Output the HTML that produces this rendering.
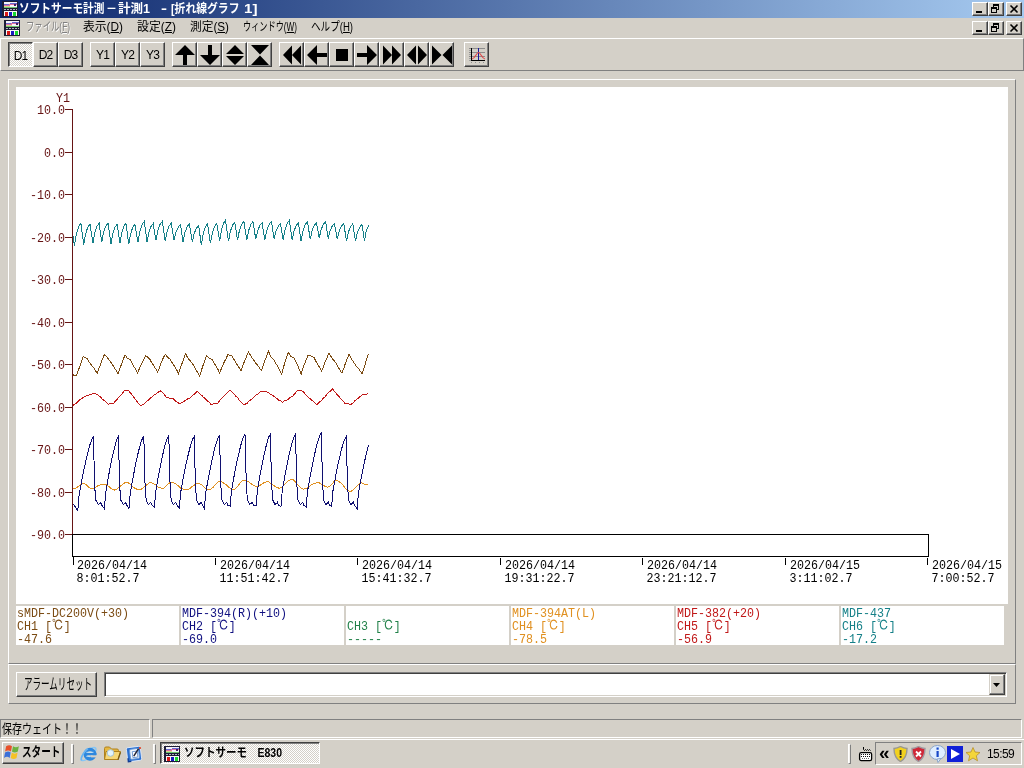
<!DOCTYPE html><html lang="ja"><head><meta charset="utf-8"><title>ソフトサーモ計測</title><style>
*{box-sizing:border-box;margin:0;padding:0}
html,body{width:1024px;height:768px;overflow:hidden;background:#d4d0c8;font-family:"Liberation Sans","Noto Sans CJK JP",sans-serif;font-size:12px;color:#000}
.abs{position:absolute}
#title{left:0;top:0;width:1024px;height:18px;background:linear-gradient(to right,#0a246a 0%,#a6caf0 100%)}
#ttext{left:19px;top:0;height:18px;line-height:17px;color:#fff;font-weight:bold;font-size:12px;white-space:nowrap;transform-origin:0 50%}
.cb{width:16px;height:14px;background:#d4d0c8;border:1px solid;border-color:#fff #404040 #404040 #fff;box-shadow:inset -1px -1px 0 #808080}
.menu{top:18px;height:20px;line-height:19px;font-size:12px;white-space:nowrap;transform-origin:0 50%}
.menu u{text-decoration:underline}
#tb{left:0;top:38px;width:1024px;height:33px;border-top:1px solid #fff;border-left:1px solid #fff;border-bottom:1px solid #808080;border-right:1px solid #808080}
.btn{top:42px;width:25px;height:25px;background:#d4d0c8;border:1px solid;border-color:#fff #404040 #404040 #fff;box-shadow:inset -1px -1px 0 #808080;text-align:center;line-height:24px;font-size:12px;letter-spacing:-0.8px}
.btn.down{border-color:#404040 #fff #fff #404040;box-shadow:inset 1px 1px 0 #808080;background-color:#d4d0c8;background-image:conic-gradient(#fff 25%,#d4d0c8 0 50%,#fff 0 75%,#d4d0c8 0);background-size:2px 2px;line-height:26px}
.btn svg{position:absolute;left:0;top:0}
.panel{border:1px solid;border-color:#fff #808080 #808080 #fff}
.mono{font-family:"Liberation Mono","IPAGothic",monospace;font-size:11.67px;white-space:pre;line-height:11.207px;transform:scaleY(1.16);transform-origin:0 0}
.leg{top:606px;height:39px;background:#fff}
.sunk{border:1px solid;border-color:#808080 #fff #fff #808080}
</style></head><body><div id="root" style="position:absolute;left:0;top:0;width:1024px;height:768px;will-change:transform;overflow:hidden"><div id="title" class="abs"></div><svg class="abs" style="left:2px;top:1px" width="16" height="16" viewBox="0 0 16 16" shape-rendering="crispEdges"><rect x="0" y="0" width="16" height="16" fill="#1c1c34"/><rect x="2" y="1" width="13" height="6" fill="#f4f4fa"/><rect x="2" y="6" width="13" height="1" fill="#6cc46c"/><rect x="2" y="5" width="6" height="1" fill="#d8d890"/><path d="M2 3.500H7L10 2.500H15" stroke="#6868d0" fill="none"/><path d="M2 4.500H6L9 3.500H15" stroke="#e070a0" fill="none"/><rect x="12" y="3" width="2" height="2" fill="#402060"/><path d="M2 8.500H15" stroke="#b0b0c0" stroke-dasharray="2 1" fill="none"/><rect x="2" y="10" width="13" height="5" fill="#f8f8f8"/><rect x="3" y="11" width="3" height="4" fill="#d81818"/><rect x="7" y="11" width="3" height="4" fill="#1818c0"/><rect x="11" y="11" width="3" height="4" fill="#18d830"/></svg><div class="abs fit" id="t1" style="left:19px;top:0px;white-space:nowrap;transform-origin:0 50%;transform:scaleX(0.8549);height:18px;line-height:19px;color:#fff;font-weight:bold;font-size:12.5px;">ソフトサーモ計測</div><div class="abs fit" id="t2" style="left:106px;top:0px;white-space:nowrap;transform-origin:0 50%;transform:scaleX(0.8789);height:18px;line-height:19px;color:#fff;font-weight:bold;font-size:12.5px;">－</div><div class="abs fit" id="t3" style="left:118px;top:0px;white-space:nowrap;transform-origin:0 50%;transform:scaleX(1.0015);height:18px;line-height:19px;color:#fff;font-weight:bold;font-size:12.5px;">計測1</div><div class="abs fit" id="t4" style="left:160.5px;top:0px;white-space:nowrap;transform-origin:0 50%;transform:scaleX(1.4382);height:18px;line-height:19px;color:#fff;font-weight:bold;font-size:12.5px;">-</div><div class="abs fit" id="t5" style="left:171px;top:0px;white-space:nowrap;transform-origin:0 50%;transform:scaleX(0.8652);height:18px;line-height:19px;color:#fff;font-weight:bold;font-size:12.5px;">[折れ線グラフ</div><div class="abs fit" id="t6" style="left:244px;top:0px;white-space:nowrap;transform-origin:0 50%;transform:scaleX(1.2135);height:18px;line-height:19px;color:#fff;font-weight:bold;font-size:12.5px;">1]</div><div class="abs cb" style="left:972px;top:2px"><svg class="abs" style="left:0;top:0" width="14" height="12"><rect x="3" y="8" width="6" height="2" fill="#000"/></svg></div><div class="abs cb" style="left:988px;top:2px"><svg class="abs" style="left:0;top:0" width="14" height="12"><rect x="4.5" y="2.5" width="5" height="4" fill="none" stroke="#000"/><rect x="4" y="1" width="6" height="2" fill="#000"/><rect x="2.5" y="5.5" width="5" height="4" fill="#d4d0c8" stroke="#000"/><rect x="2" y="4" width="6" height="2" fill="#000"/></svg></div><div class="abs cb" style="left:1006px;top:2px"><svg class="abs" style="left:0;top:0" width="14" height="12"><path d="M3.5 2.5l7 7M10.5 2.5l-7 7" stroke="#000" stroke-width="1.6" fill="none"/></svg></div><svg class="abs" style="left:4px;top:20px" width="16" height="16" viewBox="0 0 16 16" shape-rendering="crispEdges"><rect x="0" y="0" width="16" height="16" fill="#1c1c34"/><rect x="2" y="1" width="13" height="6" fill="#f4f4fa"/><rect x="2" y="6" width="13" height="1" fill="#6cc46c"/><rect x="2" y="5" width="6" height="1" fill="#d8d890"/><path d="M2 3.500H7L10 2.500H15" stroke="#6868d0" fill="none"/><path d="M2 4.500H6L9 3.500H15" stroke="#e070a0" fill="none"/><rect x="12" y="3" width="2" height="2" fill="#402060"/><path d="M2 8.500H15" stroke="#b0b0c0" stroke-dasharray="2 1" fill="none"/><rect x="2" y="10" width="13" height="5" fill="#f8f8f8"/><rect x="3" y="11" width="3" height="4" fill="#d81818"/><rect x="7" y="11" width="3" height="4" fill="#1818c0"/><rect x="11" y="11" width="3" height="4" fill="#18d830"/></svg><div class="abs menu" id="m0" style="left:26px;color:#808080;text-shadow:1px 1px 0 #fff;transform:scaleX(0.695);">ファイル(<u>F</u>)</div><div class="abs menu" id="m1" style="left:83px;transform:scaleX(0.984);">表示(<u>D</u>)</div><div class="abs menu" id="m2" style="left:137px;transform:scaleX(0.991);">設定(<u>Z</u>)</div><div class="abs menu" id="m3" style="left:190px;transform:scaleX(0.975);">測定(<u>S</u>)</div><div class="abs menu" id="m4" style="left:243px;transform:scaleX(0.681);">ウィンドウ(<u>W</u>)</div><div class="abs menu" id="m5" style="left:311px;transform:scaleX(0.797);">ヘルプ(<u>H</u>)</div><div class="abs cb" style="left:972px;top:21px"><svg class="abs" style="left:0;top:0" width="14" height="12"><rect x="3" y="8" width="6" height="2" fill="#000"/></svg></div><div class="abs cb" style="left:988px;top:21px"><svg class="abs" style="left:0;top:0" width="14" height="12"><rect x="4.5" y="2.5" width="5" height="4" fill="none" stroke="#000"/><rect x="4" y="1" width="6" height="2" fill="#000"/><rect x="2.5" y="5.5" width="5" height="4" fill="#d4d0c8" stroke="#000"/><rect x="2" y="4" width="6" height="2" fill="#000"/></svg></div><div class="abs cb" style="left:1006px;top:21px"><svg class="abs" style="left:0;top:0" width="14" height="12"><path d="M3.5 2.5l7 7M10.5 2.5l-7 7" stroke="#000" stroke-width="1.6" fill="none"/></svg></div><div id="tb" class="abs"></div><div class="abs btn down" style="left:8px;">D1</div><div class="abs btn" style="left:33px;">D2</div><div class="abs btn" style="left:58px;">D3</div><div class="abs btn" style="left:90px;">Y1</div><div class="abs btn" style="left:115px;">Y2</div><div class="abs btn" style="left:140px;">Y3</div><div class="abs btn" style="left:172px;"><svg width="23" height="23" viewBox="0 0 23 23"><path d="M12 2L22 12H14V22H10V12H2Z" fill="#000"/></svg></div><div class="abs btn" style="left:197px;"><svg width="23" height="23" viewBox="0 0 23 23"><path d="M12 22L22 12H14V2H10V12H2Z" fill="#000"/></svg></div><div class="abs btn" style="left:222px;"><svg width="23" height="23" viewBox="0 0 23 23"><path d="M12 2L21 11H3Z M12 22L21 13H3Z" fill="#000"/></svg></div><div class="abs btn" style="left:247px;"><svg width="23" height="23" viewBox="0 0 23 23"><path d="M3 2H21L12 11.500Z M3 22H21L12 12.500Z" fill="#000"/></svg></div><div class="abs btn" style="left:279px;"><svg width="23" height="23" viewBox="0 0 23 23"><path d="M12 2.500V21.500L3 12Z M21 2.500V21.500L12 12Z" fill="#000"/></svg></div><div class="abs btn" style="left:304px;"><svg width="23" height="23" viewBox="0 0 23 23"><path d="M2 12L12 2V10H22V14H12V22Z" fill="#000"/></svg></div><div class="abs btn" style="left:329px;"><svg width="23" height="23" viewBox="0 0 23 23"><rect x="6" y="6" width="12" height="12" fill="#000"/></svg></div><div class="abs btn" style="left:354px;"><svg width="23" height="23" viewBox="0 0 23 23"><path d="M22 12L12 2V10H2V14H12V22Z" fill="#000"/></svg></div><div class="abs btn" style="left:379px;"><svg width="23" height="23" viewBox="0 0 23 23"><path d="M3 2.500V21.500L12 12Z M12 2.500V21.500L21 12Z" fill="#000"/></svg></div><div class="abs btn" style="left:404px;"><svg width="23" height="23" viewBox="0 0 23 23"><path d="M11 2.500V21.500L2 12Z M13 2.500V21.500L22 12Z" fill="#000"/></svg></div><div class="abs btn" style="left:429px;"><svg width="23" height="23" viewBox="0 0 23 23"><path d="M2 2.500V21.500L11.500 12Z M22 2.500V21.500L12.500 12Z" fill="#000"/></svg></div><div class="abs btn" style="left:464px;"><svg width="23" height="23" viewBox="0 0 23 23"><g shape-rendering="crispEdges"><path d="M4 5.500H20M4 9.500H20M4 13.500H20" stroke="#8c8c8c" fill="none"/><path d="M4 7.500H6M4 11.500H6M4 15.500H6M4 17.500H6" stroke="#a0a0a0" fill="none"/><path d="M6.500 19V20M10.500 19V20M14.500 19V20M18.500 19V20" stroke="#909090" fill="none"/><path d="M6.500 5V18M6 17.500H20" stroke="#000" fill="none"/><path d="M13.500 5V17" stroke="#18189c" fill="none"/></g><path d="M7 16C10 15.500 11.500 9.500 13.500 9.500S17 15.500 20 16" stroke="#e04848" fill="none" stroke-width="1.2"/></svg></div><div class="abs panel" style="left:8px;top:79px;width:1008px;height:585px"></div><div class="abs" style="left:16px;top:87px;width:992px;height:517px;background:#fff"></div><div class="abs leg" style="left:16px;width:163px"></div><div class="abs mono" style="left:17px;top:608px;color:#7b4b13">sMDF-DC200V(+30)
CH1 [<span class="dc">℃</span>]
-47.6</div><div class="abs leg" style="left:181px;width:163px"></div><div class="abs mono" style="left:182px;top:608px;color:#101080">MDF-394(R)(+10)
CH2 [<span class="dc">℃</span>]
-69.0</div><div class="abs leg" style="left:346px;width:163px"></div><div class="abs mono" style="left:347px;top:608px;color:#208048"> 
CH3 [<span class="dc">℃</span>]
-----</div><div class="abs leg" style="left:511px;width:163px"></div><div class="abs mono" style="left:512px;top:608px;color:#e09020">MDF-394AT(L)
CH4 [<span class="dc">℃</span>]
-78.5</div><div class="abs leg" style="left:676px;width:163px"></div><div class="abs mono" style="left:677px;top:608px;color:#c01818">MDF-382(+20)
CH5 [<span class="dc">℃</span>]
-56.9</div><div class="abs leg" style="left:841px;width:163px"></div><div class="abs mono" style="left:842px;top:608px;color:#158088">MDF-437
CH6 [<span class="dc">℃</span>]
-17.2</div><svg class="abs" style="left:0;top:0" width="1024" height="768" viewBox="0 0 1024 768" shape-rendering="crispEdges"><path d="M72.5 109V534" stroke="#661414" fill="none"/><path d="M65 109.5H72" stroke="#661414" fill="none"/><path d="M65 152.5H72" stroke="#661414" fill="none"/><path d="M65 194.5H72" stroke="#661414" fill="none"/><path d="M65 237.5H72" stroke="#661414" fill="none"/><path d="M65 279.5H72" stroke="#661414" fill="none"/><path d="M65 322.5H72" stroke="#661414" fill="none"/><path d="M65 364.5H72" stroke="#661414" fill="none"/><path d="M65 407.5H72" stroke="#661414" fill="none"/><path d="M65 449.5H72" stroke="#661414" fill="none"/><path d="M65 492.5H72" stroke="#661414" fill="none"/><path d="M65 534.5H72" stroke="#661414" fill="none"/><rect x="72.5" y="534.5" width="856" height="22" fill="none" stroke="#000"/><path d="M73.5 557V565" stroke="#000" fill="none"/><path d="M215.5 558V565" stroke="#000" fill="none"/><path d="M357.5 558V565" stroke="#000" fill="none"/><path d="M500.5 558V565" stroke="#000" fill="none"/><path d="M642.5 558V565" stroke="#000" fill="none"/><path d="M785.5 558V565" stroke="#000" fill="none"/><path d="M927.5 558V565" stroke="#000" fill="none"/><polyline points="73.0,236.0 74.4,246.0 76.4,234.1 78.6,226.6 80.9,223.2 83.7,244.7 85.6,233.9 87.8,227.1 90.0,224.0 92.9,243.2 94.8,232.8 96.9,226.2 99.1,223.2 101.7,242.2 103.6,232.3 105.9,226.0 108.1,223.2 111.0,243.7 112.8,233.6 115.0,227.1 117.1,224.2 120.0,243.2 121.8,232.8 123.8,226.2 125.9,223.2 128.8,244.4 130.6,233.9 132.8,227.2 134.9,224.2 137.9,242.2 139.8,231.4 142.0,224.6 144.2,221.5 147.1,242.2 148.9,232.5 151.1,226.3 153.2,223.5 155.9,240.3 157.8,230.5 160.1,224.3 162.3,221.5 165.2,241.2 167.0,231.8 169.2,225.9 171.3,223.2 174.0,240.3 176.0,232.1 178.3,227.0 180.6,224.6 183.0,242.2 184.9,232.6 187.2,226.5 189.4,223.7 192.3,242.2 194.2,233.5 196.5,227.9 198.7,225.4 201.3,245.4 203.2,234.0 205.3,226.8 207.5,223.5 210.4,243.2 212.3,233.0 214.6,226.5 216.8,223.5 219.7,241.0 221.4,230.2 223.5,223.4 225.5,220.3 228.5,241.2 230.4,231.3 232.6,225.0 234.8,222.2 237.5,240.3 239.4,230.5 241.7,224.3 243.9,221.5 246.8,240.3 248.6,230.6 250.8,224.5 252.9,221.7 255.8,239.3 257.7,230.8 259.9,225.4 262.1,223.0 264.8,240.0 266.8,230.4 269.2,224.3 271.5,221.5 274.1,238.7 276.0,231.0 278.3,226.0 280.5,223.8 283.2,239.9 285.0,229.8 287.2,223.4 289.3,220.5 292.2,239.9 294.1,231.0 296.2,225.3 298.4,222.7 301.0,241.0 302.9,231.0 305.2,224.6 307.5,221.7 310.2,239.3 312.1,230.7 314.3,225.2 316.5,222.7 319.2,238.1 321.1,229.6 323.4,224.2 325.6,221.7 328.2,238.7 330.1,231.0 332.2,226.0 334.4,223.8 337.3,239.3 339.2,231.2 341.5,226.1 343.8,223.8 346.5,241.0 348.4,232.1 350.6,226.4 352.8,223.8 355.5,241.0 357.4,232.5 359.7,227.1 362.0,224.6 364.5,241.0 365.9,232.8 367.4,227.6 369.0,225.2" fill="none" stroke="#158088" stroke-width="1"/><polyline points="73.1,374.4 74.5,376.0 76.3,375.9 78.2,370.7 80.0,366.0 81.7,360.8 83.3,356.4 85.0,357.5 87.2,358.8 89.6,362.6 92.0,366.0 93.8,367.9 95.5,370.8 97.3,373.1 99.2,367.9 101.0,363.0 102.7,358.4 104.4,354.8 107.0,357.0 108.8,359.5 110.6,361.9 112.5,364.4 114.3,367.9 116.2,370.5 118.1,374.1 120.0,368.1 122.0,363.0 125.0,354.8 127.5,358.5 130.2,359.5 132.0,362.8 133.8,366.7 135.7,369.2 137.5,373.1 139.8,367.7 142.0,363.0 143.9,359.5 145.8,355.6 148.0,357.5 149.7,358.8 151.6,362.6 153.6,365.5 155.6,368.6 157.5,372.0 159.5,367.6 161.5,362.0 163.4,357.7 165.3,354.4 168.0,357.8 170.0,358.8 171.7,362.2 173.4,364.5 175.2,367.3 176.9,370.2 178.6,373.6 180.6,367.6 182.5,362.0 185.6,353.8 187.3,357.0 189.0,359.5 191.9,362.7 193.8,365.6 195.8,369.4 197.8,372.8 199.7,375.9 201.6,369.8 203.5,364.0 206.7,355.6 209.5,358.5 212.2,359.5 214.1,363.0 215.9,365.8 217.8,369.2 219.7,373.1 221.8,367.4 224.0,362.5 225.9,358.9 227.8,354.8 229.8,355.1 231.7,355.6 233.8,359.1 236.0,363.0 237.7,365.6 239.4,367.9 241.1,370.5 243.1,365.0 245.0,360.0 246.7,356.2 248.4,351.7 251.5,357.0 254.4,361.1 256.1,363.7 257.9,365.5 259.6,368.2 261.4,370.5 263.2,365.3 265.0,360.0 266.7,356.1 268.4,351.2 271.0,357.0 273.9,359.5 275.8,363.4 277.8,366.5 279.8,371.0 281.7,374.1 283.4,367.6 285.0,362.0 286.6,357.2 288.3,352.5 291.0,356.5 294.2,358.0 296.0,362.3 297.7,365.6 299.5,370.1 301.2,374.1 302.9,368.5 304.5,364.0 306.1,360.0 307.8,355.6 310.5,355.8 312.1,356.8 313.8,357.2 315.7,360.8 317.7,364.7 319.6,367.5 321.6,371.2 323.6,366.4 325.5,361.0 327.2,357.3 328.9,353.3 332.0,358.0 333.8,360.4 335.6,362.7 337.7,366.1 339.8,370.0 341.9,373.1 343.7,368.6 345.5,363.0 347.2,358.7 348.9,354.4 351.5,359.0 354.4,363.4 356.3,366.1 358.3,368.0 360.2,371.3 362.2,373.6 363.9,368.5 365.5,363.0 368.4,354.1" fill="none" stroke="#7b4b13" stroke-width="1"/><polyline points="73.1,405.3 75.2,404.1 77.3,402.2 79.4,400.2 81.6,398.6 83.8,397.3 86.0,396.0 87.8,395.6 89.7,394.3 91.6,394.2 93.4,393.6 95.3,393.8 97.3,394.7 99.1,395.9 101.0,397.4 102.8,399.7 104.6,400.6 106.5,402.3 108.3,404.1 110.1,403.7 111.9,403.9 113.8,403.3 115.6,400.7 117.4,398.9 119.2,396.8 121.0,395.0 122.9,392.8 124.7,390.3 126.7,390.9 128.6,390.8 130.6,393.0 132.5,395.5 134.4,397.9 136.4,400.9 138.4,403.3 140.3,405.3 143.4,404.8 145.2,402.8 147.1,401.1 148.9,399.5 150.7,397.8 152.6,396.4 154.4,394.7 156.6,393.5 158.7,391.9 160.9,390.8 162.9,392.6 164.9,395.4 166.9,397.8 169.0,397.9 171.0,398.4 173.1,398.6 175.2,400.8 177.3,402.2 179.4,403.8 181.3,402.7 183.1,401.8 185.0,400.8 186.9,399.2 188.8,398.6 190.9,397.2 193.0,395.2 195.2,393.5 197.3,391.2 199.3,393.5 201.3,395.0 203.3,397.0 205.4,398.6 207.4,401.1 209.4,402.4 211.4,404.8 213.5,403.9 215.6,403.5 217.7,403.3 220.0,400.2 222.0,397.9 224.1,396.1 226.1,393.8 228.2,391.8 230.2,390.3 232.1,392.0 234.0,393.9 235.9,396.2 237.7,397.9 239.6,400.7 241.5,402.5 243.4,404.4 246.6,403.8 248.6,401.6 250.7,399.9 252.7,398.2 254.8,396.5 256.8,394.4 258.9,393.4 260.9,391.2 263.5,391.7 266.1,391.2 267.9,392.5 269.7,393.7 271.6,394.6 273.4,395.9 275.2,397.3 277.0,398.5 278.9,400.3 280.7,400.9 282.5,402.5 284.5,400.8 286.6,400.5 288.6,398.8 290.7,397.1 292.7,396.2 295.2,393.3 297.7,390.3 301.2,390.3 303.2,391.6 305.2,394.0 307.1,396.2 309.1,397.9 311.0,399.6 313.0,400.9 314.9,402.9 316.9,404.8 318.8,402.5 320.8,401.1 322.8,398.8 324.7,397.1 326.6,394.6 328.6,392.5 330.6,391.1 332.5,388.8 334.6,391.7 336.7,394.0 338.8,396.3 340.8,398.8 342.9,401.1 345.0,403.3 347.1,403.4 349.2,404.1 351.2,404.4 353.1,402.7 354.9,400.8 356.7,399.2 358.6,397.9 360.4,396.3 362.2,395.0 364.3,394.7 366.3,394.4 368.4,393.4" fill="none" stroke="#c01818" stroke-width="1"/><polyline points="73.1,489.0 74.8,488.9 76.5,487.9 78.2,486.6 79.9,484.9 81.6,483.8 83.3,483.4 84.7,483.7 86.2,484.6 87.6,486.0 89.0,487.4 90.5,488.2 91.9,488.3 93.9,488.1 95.8,487.4 97.8,485.9 99.7,485.2 101.6,484.5 103.6,484.2 105.4,484.5 107.2,485.4 109.0,486.7 110.9,488.5 112.7,489.3 114.5,490.0 116.5,489.6 118.4,487.9 120.4,486.1 122.3,484.6 124.3,483.1 126.2,482.3 128.3,482.8 130.4,484.1 132.5,486.4 134.6,488.2 136.7,489.1 138.8,490.0 140.8,489.6 142.9,488.1 145.0,486.2 147.1,484.6 149.2,483.0 151.2,482.5 153.1,483.5 154.9,484.3 156.7,485.6 158.5,487.2 160.4,487.9 162.2,488.5 163.8,488.1 165.3,486.7 166.9,485.3 168.5,483.8 170.0,482.7 171.6,482.6 173.9,482.8 176.3,484.3 178.6,485.9 180.9,488.2 183.3,489.2 185.6,489.8 187.7,489.4 189.8,488.5 191.8,486.7 193.9,485.4 196.0,484.0 198.1,483.6 199.9,484.0 201.7,484.9 203.6,486.7 205.4,488.1 207.2,489.1 209.0,490.0 210.8,489.0 212.7,487.7 214.5,485.7 216.3,483.5 218.2,481.9 220.0,481.4 222.2,482.0 224.4,483.6 226.7,485.2 228.9,487.4 231.1,488.7 233.3,489.3 235.1,488.9 236.9,487.1 238.8,484.7 240.6,482.5 242.4,480.9 244.2,480.0 246.3,480.5 248.4,481.6 250.4,483.1 252.5,484.8 254.6,485.8 256.7,486.3 258.4,485.9 260.1,485.4 261.8,484.0 263.5,483.0 265.2,482.2 266.9,481.5 269.0,482.1 271.1,483.5 273.1,485.2 275.2,486.4 277.3,487.6 279.4,488.3 281.3,487.4 283.3,485.9 285.2,483.6 287.1,481.7 289.1,480.2 291.0,479.6 293.1,479.8 295.2,481.9 297.3,484.3 299.4,486.4 301.5,488.6 303.6,489.3 305.8,488.4 308.0,487.6 310.2,485.7 312.5,484.1 314.7,483.2 316.9,482.7 318.7,482.6 320.5,483.6 322.4,484.9 324.2,485.9 326.0,486.7 327.8,487.1 329.2,486.9 330.7,485.2 332.1,483.9 333.5,482.1 335.0,480.7 336.4,480.4 338.8,481.3 341.1,483.2 343.4,485.7 345.8,489.0 348.1,490.8 350.5,491.7 352.3,490.6 354.1,489.2 355.9,487.0 357.8,485.3 359.6,483.5 361.4,482.9 362.6,483.2 363.7,483.9 364.9,484.3 366.1,484.5 367.2,484.8 368.4,485.2" fill="none" stroke="#e09020" stroke-width="1"/><polyline points="73.1,503.9 75.0,506.5 77.8,510.9 79.0,495.9 80.4,487.8 81.9,480.0 83.3,472.6 84.8,465.7 86.2,459.1 87.6,453.1 89.1,447.7 90.5,442.9 92.0,439.1 93.4,436.7 94.7,486.7 95.8,500.0 98.1,504.5 99.4,503.5 100.5,502.3 101.9,505.5 104.4,508.6 105.6,493.6 106.9,485.8 108.2,478.3 109.4,471.2 110.7,464.5 112.0,458.3 113.3,452.5 114.6,447.2 115.8,442.7 117.1,439.0 118.4,436.7 119.7,486.7 120.8,500.0 123.1,504.5 124.4,503.5 125.5,502.3 126.9,505.5 129.0,508.6 130.2,493.6 131.6,485.7 132.9,478.2 134.3,471.1 135.6,464.3 137.0,458.0 138.3,452.2 139.7,446.9 141.0,442.3 142.4,438.5 143.8,436.2 145.1,486.2 146.2,500.0 148.4,504.5 149.8,503.5 150.8,502.3 152.2,505.5 154.4,507.5 155.6,492.5 156.9,484.7 158.2,477.2 159.5,470.1 160.9,463.4 162.2,457.2 163.5,451.4 164.8,446.1 166.1,441.6 167.4,437.9 168.8,435.6 170.1,485.6 171.2,500.0 173.4,504.5 174.8,503.5 175.8,502.3 177.2,505.5 179.4,507.8 180.6,492.8 182.0,485.1 183.3,477.7 184.7,470.7 186.0,464.1 187.4,458.0 188.8,452.3 190.1,447.1 191.5,442.6 192.8,438.9 194.2,436.7 195.5,486.7 196.6,500.0 198.9,504.5 200.2,503.5 201.3,502.3 202.7,505.5 204.4,508.6 205.6,493.6 207.0,485.6 208.4,478.0 209.8,470.8 211.2,464.0 212.6,457.6 213.9,451.7 215.3,446.3 216.7,441.7 218.1,437.9 219.5,435.6 220.8,485.6 221.9,500.0 224.2,504.5 225.5,503.5 226.6,502.3 228.0,505.5 230.2,506.2 231.4,491.2 232.8,483.5 234.1,476.0 235.5,468.9 236.8,462.2 238.2,455.9 239.6,450.2 240.9,444.9 242.3,440.4 243.6,436.7 245.0,434.4 246.3,484.4 247.4,500.0 249.7,504.5 251.0,503.5 252.1,502.3 253.5,505.5 256.2,505.5 257.4,490.5 258.7,482.8 260.0,475.4 261.3,468.4 262.6,461.8 263.9,455.7 265.2,450.0 266.4,444.8 267.7,440.3 269.0,436.6 270.3,434.4 271.6,484.4 272.7,500.0 275.0,504.5 276.3,503.5 277.4,502.3 278.8,505.5 281.0,506.2 282.2,491.2 283.5,483.5 284.9,476.0 286.2,468.9 287.5,462.2 288.9,455.9 290.2,450.2 291.5,444.9 292.8,440.4 294.2,436.7 295.5,434.4 296.8,484.4 297.9,500.0 300.2,504.5 301.5,503.5 302.6,502.3 304.0,505.5 306.2,507.0 307.4,492.0 308.8,483.9 310.2,476.2 311.6,468.8 313.0,461.9 314.4,455.4 315.7,449.4 317.1,444.0 318.5,439.3 319.9,435.4 321.2,433.1 322.6,483.1 323.6,500.0 325.9,504.5 327.2,503.5 328.4,502.3 329.8,505.5 331.7,506.2 332.9,491.2 334.2,483.8 335.6,476.6 336.9,469.8 338.2,463.4 339.6,457.4 340.9,451.8 342.2,446.8 343.6,442.4 344.9,438.9 346.2,436.7 347.6,486.7 348.6,500.0 350.9,504.5 352.2,503.5 353.4,502.3 354.8,505.5 357.2,508.6 358.4,493.6 359.8,485.6 361.2,477.9 362.7,470.6 364.1,463.7 365.5,457.2 366.9,451.2 368.3,445.9 368.4,445.3" fill="none" stroke="#101070" stroke-width="1"/></svg><div class="abs mono" style="left:56px;top:93px;color:#661414">Y1</div><div class="abs mono" style="left:16px;width:49px;text-align:right;top:105px;color:#661414">10.0</div><div class="abs mono" style="left:16px;width:49px;text-align:right;top:148px;color:#661414">0.0</div><div class="abs mono" style="left:16px;width:49px;text-align:right;top:190px;color:#661414">-10.0</div><div class="abs mono" style="left:16px;width:49px;text-align:right;top:233px;color:#661414">-20.0</div><div class="abs mono" style="left:16px;width:49px;text-align:right;top:275px;color:#661414">-30.0</div><div class="abs mono" style="left:16px;width:49px;text-align:right;top:318px;color:#661414">-40.0</div><div class="abs mono" style="left:16px;width:49px;text-align:right;top:360px;color:#661414">-50.0</div><div class="abs mono" style="left:16px;width:49px;text-align:right;top:403px;color:#661414">-60.0</div><div class="abs mono" style="left:16px;width:49px;text-align:right;top:445px;color:#661414">-70.0</div><div class="abs mono" style="left:16px;width:49px;text-align:right;top:488px;color:#661414">-80.0</div><div class="abs mono" style="left:16px;width:49px;text-align:right;top:530px;color:#661414">-90.0</div><div class="abs mono" style="left:77px;top:560px">2026/04/14
<span style="margin-left:-0.5px">8:01:52.7</span></div><div class="abs mono" style="left:220px;top:560px">2026/04/14
<span style="margin-left:-0.5px">11:51:42.7</span></div><div class="abs mono" style="left:362px;top:560px">2026/04/14
<span style="margin-left:-0.5px">15:41:32.7</span></div><div class="abs mono" style="left:505px;top:560px">2026/04/14
<span style="margin-left:-0.5px">19:31:22.7</span></div><div class="abs mono" style="left:647px;top:560px">2026/04/14
<span style="margin-left:-0.5px">23:21:12.7</span></div><div class="abs mono" style="left:790px;top:560px">2026/04/15
<span style="margin-left:-0.5px">3:11:02.7</span></div><div class="abs mono" style="left:932px;top:560px">2026/04/15
<span style="margin-left:-0.5px">7:00:52.7</span></div><div class="abs panel" style="left:8px;top:664px;width:1008px;height:40px"></div><div class="abs" id="alarm" style="left:16px;top:672px;width:81px;height:25px;background:#d4d0c8;border:1px solid;border-color:#fff #404040 #404040 #fff;box-shadow:inset -1px -1px 0 #808080"></div><div class="abs fit" id="alarmt" style="left:23.5px;top:672px;white-space:nowrap;transform-origin:0 50%;transform:scaleX(0.5687);height:25px;line-height:24px;font-size:15px;">アラームリセット</div><div class="abs" style="left:104px;top:672px;width:903px;height:25px;background:#fff;border:1px solid;border-color:#808080 #fff #fff #808080;box-shadow:inset 1px 1px 0 #404040,inset -1px -1px 0 #d4d0c8"></div><div class="abs" style="left:989px;top:674px;width:16px;height:21px;background:#d4d0c8;border:1px solid;border-color:#d4d0c8 #404040 #404040 #d4d0c8;box-shadow:inset -1px -1px 0 #808080,inset 1px 1px 0 #fff"><svg class="abs" style="left:3px;top:8px" width="7" height="4"><path d="M0 0H7L3.5 4Z" fill="#000"/></svg></div><div class="abs sunk" style="left:0;top:719px;width:150px;height:19px;line-height:16px;font-size:12px;white-space:nowrap;padding-left:1px"></div><div class="abs sunk" style="left:152px;top:719px;width:870px;height:19px"></div><div class="abs fit" id="st" style="left:2px;top:720px;white-space:nowrap;transform-origin:0 50%;transform:scaleX(0.7691);height:17px;line-height:17px;font-size:13px;">保存ウェイト！！</div><div class="abs" style="left:0;top:739px;width:1024px;height:1px;background:#fff"></div><div class="abs" style="left:2px;top:742px;width:62px;height:22px;background:#d4d0c8;border:1px solid;border-color:#fff #404040 #404040 #fff;box-shadow:inset -1px -1px 0 #808080"></div><svg class="abs" style="left:4px;top:743px" width="17" height="17" viewBox="0 0 16 16"><path d="M2 3Q5 1 7.5 3L6.5 8Q4 6 1 8Z" fill="#e8502a"/><path d="M8.5 3Q11 5 14 3L13 8Q10 10 7.5 8Z" fill="#6cb33f"/><path d="M1 9Q4 7 6.3 9L5.3 14Q3 12 0 14Z" fill="#3a6fd8"/><path d="M7.3 9Q10 11 12.8 9L11.8 14Q9 16 6.3 14Z" fill="#f5c226"/></svg><div class="abs fit" id="start" style="left:22px;top:742px;white-space:nowrap;transform-origin:0 50%;transform:scaleX(0.7402);height:22px;line-height:20px;font-weight:bold;font-size:13px;">スタート</div><div class="abs" style="left:71px;top:744px;width:3px;height:20px;background:#f2f0ec;border:1px solid;border-color:#fff #808080 #808080 #fff"></div><div class="abs" style="left:153px;top:744px;width:3px;height:20px;background:#f2f0ec;border:1px solid;border-color:#fff #808080 #808080 #fff"></div><div class="abs" style="left:848px;top:744px;width:3px;height:20px;background:#f2f0ec;border:1px solid;border-color:#fff #808080 #808080 #fff"></div><svg class="abs" style="left:80px;top:745px" width="18" height="18" viewBox="80 745 18 18"><ellipse cx="88.500" cy="754" rx="9.200" ry="3.600" transform="rotate(-40 88.500 754)" fill="none" stroke="#86c6f6" stroke-width="1.500"/><circle cx="90" cy="754.200" r="4.700" fill="none" stroke="#2f88de" stroke-width="3.500"/><rect x="86" y="753" width="10.400" height="2.300" fill="#2f88de"/><rect x="91" y="755.300" width="6" height="2.100" fill="#d4d0c8"/><path d="M86.300 752.300H93.500M86.300 756.300H90.500" stroke="#bfe2fb" stroke-width=".9" fill="none"/><path d="M81.300 760.500C80.800 757 84 751 88 748.500" stroke="#6ab4f0" stroke-width="1.600" fill="none"/></svg><svg class="abs" style="left:103px;top:745px" width="18" height="18" viewBox="103 745 18 18"><path d="M104.500 748.500q0-1.500 1.500-1.500h3.500l2 2h5.500q1.500 0 1.500 1.500v8.500h-14Z" fill="#e6b740" stroke="#b0821c"/><path d="M104.500 759.500l1.500-8h14.500l-2.500 8Z" fill="#f6d777" stroke="#b0821c"/><path d="M118 759.800l2.500-7.500" stroke="#7a5a10" stroke-width="1.200" fill="none"/><circle cx="110.500" cy="753" r="3.300" fill="#e4f4fb" stroke="#a8c4d4"/></svg><svg class="abs" style="left:125px;top:744px" width="19" height="19" viewBox="125 744 19 19"><g transform="rotate(-7 134 754)"><rect x="127" y="747" width="14" height="14" rx="1.500" fill="#2a6fd0" stroke="#e8f2ff" stroke-width=".8"/><path d="M127.500 757.500V761h3" stroke="#123c90" stroke-width="1.400" fill="none"/><rect x="130" y="749" width="9" height="10" rx="1.500" fill="#f2f8ff" stroke="#6a9ad8"/><rect x="132.500" y="751.500" width="5" height="6" fill="#fff" stroke="#5a8acb" stroke-width=".8"/><path d="M133.500 756l5.500-6.500" stroke="#223" stroke-width="1.500" fill="none"/><circle cx="140.700" cy="748.800" r="1.100" fill="#e04828"/></g></svg><div class="abs" style="left:160px;top:742px;width:160px;height:22px;background-color:#d4d0c8;background-image:conic-gradient(#fff 25%,#d4d0c8 0 50%,#fff 0 75%,#d4d0c8 0);background-size:2px 2px;border:1px solid;border-color:#404040 #fff #fff #404040;box-shadow:inset 1px 1px 0 #808080"></div><svg class="abs" style="left:164px;top:746px" width="16" height="16" viewBox="0 0 16 16" shape-rendering="crispEdges"><rect x="0" y="0" width="16" height="16" fill="#1c1c34"/><rect x="2" y="1" width="13" height="6" fill="#f4f4fa"/><rect x="2" y="6" width="13" height="1" fill="#6cc46c"/><rect x="2" y="5" width="6" height="1" fill="#d8d890"/><path d="M2 3.500H7L10 2.500H15" stroke="#6868d0" fill="none"/><path d="M2 4.500H6L9 3.500H15" stroke="#e070a0" fill="none"/><rect x="12" y="3" width="2" height="2" fill="#402060"/><path d="M2 8.500H15" stroke="#b0b0c0" stroke-dasharray="2 1" fill="none"/><rect x="2" y="10" width="13" height="5" fill="#f8f8f8"/><rect x="3" y="11" width="3" height="4" fill="#d81818"/><rect x="7" y="11" width="3" height="4" fill="#1818c0"/><rect x="11" y="11" width="3" height="4" fill="#18d830"/></svg><div class="abs" id="task" style="transform:scaleX(0.875);left:184px;top:742px;height:22px;line-height:23px;font-weight:bold;font-size:12px;white-space:nowrap;transform-origin:0 50%">ソフトサーモ　E830</div><svg class="abs" style="left:858px;top:746px" width="15" height="16" viewBox="0 0 15 16"><path d="M5.500 1V3.500l1 1 1-1 1 1 1-1 1 1 1-1 1 1" stroke="#000" fill="none" stroke-width="1"/><rect x="1.600" y="6.600" width="12" height="8" rx="1.600" fill="#fff" stroke="#000" stroke-width="1.300"/><g shape-rendering="crispEdges"><path d="M3 8.500H13M3 10.500H13" stroke="#111" stroke-dasharray="1 1" fill="none"/><path d="M4 12.500H12" stroke="#666" stroke-dasharray="1 1" fill="none"/></g></svg><div class="abs sunk" style="left:875px;top:742px;width:147px;height:23px"></div><div class="abs" id="chev" style="left:879px;top:742px;font-weight:bold;font-size:19px;line-height:22px;letter-spacing:-1px">«</div><svg class="abs" style="left:893px;top:746px" width="15" height="16" viewBox="0 0 15 16"><path d="M7.5 0.5C5 2 3 2.5 1 2.5C1 9 3 13 7.5 15.5C12 13 14 9 14 2.5C12 2.5 10 2 7.5 0.5Z" fill="#f2d21e" stroke="#9a9890" stroke-width="1.400"/><rect x="6.7" y="4" width="1.8" height="5" fill="#222"/><rect x="6.7" y="10" width="1.8" height="1.8" fill="#222"/></svg><svg class="abs" style="left:911px;top:746px" width="15" height="16" viewBox="0 0 15 16"><path d="M7.5 0.5C5 2 3 2.5 1 2.5C1 9 3 13 7.5 15.5C12 13 14 9 14 2.5C12 2.5 10 2 7.5 0.5Z" fill="#d02838" stroke="#a09aa0" stroke-width="1.400"/><path d="M5 5.5l5 5M10 5.5l-5 5" stroke="#fff" stroke-width="1.8"/></svg><svg class="abs" style="left:929px;top:745px" width="17" height="18" viewBox="0 0 17 18"><ellipse cx="8.5" cy="7.5" rx="8" ry="7" fill="#dfeeff" stroke="#8aa4c8"/><path d="M8 14l1 3.5 3-4Z" fill="#dfeeff" stroke="#8aa4c8"/><rect x="7.5" y="6" width="2.2" height="6" fill="#1848c8"/><rect x="7.5" y="2.5" width="2.2" height="2.2" fill="#1848c8"/></svg><div class="abs" style="left:947px;top:746px;width:16px;height:16px;background:#1020d8"></div><svg class="abs" style="left:947px;top:746px" width="16" height="16"><path d="M4 3V13L13 8Z" fill="#fff"/></svg><svg class="abs" style="left:966px;top:747px" width="15" height="15" viewBox="0 0 15 15"><path d="M7 0.5L9 5l5 .5-3.7 3.3 1.2 5L7 11l-4.500 2.800 1.200-5L0 5.500 5 5Z" fill="#f4d63a" stroke="#b8902a" stroke-width=".8"/></svg><div class="abs" id="clock" style="left:987px;top:746px;font-size:12px;line-height:17px;letter-spacing:-0.6px">15:59</div></div></body></html>
